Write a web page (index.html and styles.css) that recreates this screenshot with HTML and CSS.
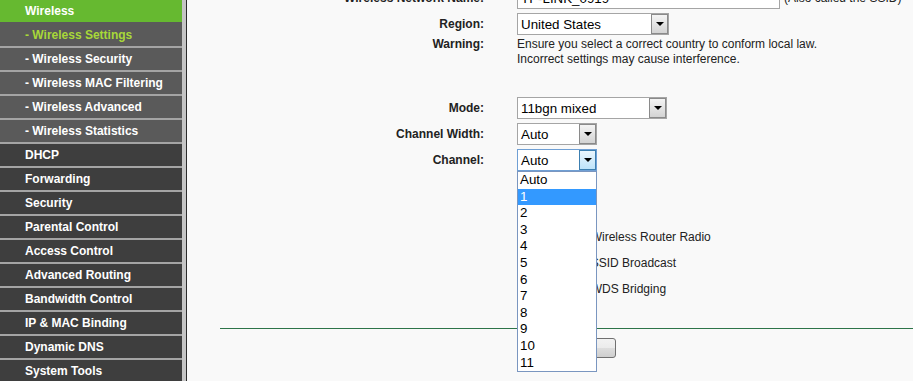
FILE: index.html
```html
<!DOCTYPE html>
<html lang="en">
<head>
    <meta charset="UTF-8">
    <title>Wireless Settings</title>
    <link rel="stylesheet" href="styles.css">
</head>
<body>

    <div class="page">
        <div class="menu">
            <div class="active">Wireless</div>
            <div class="sub current">- Wireless Settings</div>
            <div class="sub">- Wireless Security</div>
            <div class="sub">- Wireless MAC Filtering</div>
            <div class="sub">- Wireless Advanced</div>
            <div class="sub">- Wireless Statistics</div>
            <div class="item">DHCP</div>
            <div class="item">Forwarding</div>
            <div class="item">Security</div>
            <div class="item">Parental Control</div>
            <div class="item">Access Control</div>
            <div class="item">Advanced Routing</div>
            <div class="item">Bandwidth Control</div>
            <div class="item">IP &amp; MAC Binding</div>
            <div class="item">Dynamic DNS</div>
            <div class="item">System Tools</div>
        </div>

        <div class="main">
            <div class="form">
                <div class="label">Wireless Network Name:</div>
                <div class="field">
                    <div class="textbox">TP-LINK_0919</div>
                    <span class="note">(Also called the SSID)</span>
                </div>

                <div class="label">Region:</div>
                <div class="field">
                    <div class="select region"><span class="value">United States</span><span class="arrow"></span></div>
                </div>

                <div class="label top">Warning:</div>
                <div class="field multi">
                    Ensure you select a correct country to conform local law.<br>
                    Incorrect settings may cause interference.
                </div>

                <div class="spacer gap28"></div>

                <div class="label">Mode:</div>
                <div class="field">
                    <div class="select mode"><span class="value">11bgn mixed</span><span class="arrow"></span></div>
                </div>

                <div class="label">Channel Width:</div>
                <div class="field">
                    <div class="select short"><span class="value">Auto</span><span class="arrow"></span></div>
                </div>

                <div class="label">Channel:</div>
                <div class="field">
                    <div class="select short focus">
                        <span class="value">Auto</span><span class="arrow"></span>
                        <div class="options">
                            <div>Auto</div>
                            <div class="hover">1</div>
                            <div>2</div>
                            <div>3</div>
                            <div>4</div>
                            <div>5</div>
                            <div>6</div>
                            <div>7</div>
                            <div>8</div>
                            <div>9</div>
                            <div>10</div>
                            <div>11</div>
                        </div>
                    </div>
                </div>

                <div class="spacer gap51"></div>

                <div class="label"></div>
                <div class="field check"><input type="checkbox" checked>Enable Wireless Router Radio</div>

                <div class="label"></div>
                <div class="field check"><input type="checkbox" checked>Enable SSID Broadcast</div>

                <div class="label"></div>
                <div class="field check"><input type="checkbox">Enable WDS Bridging</div>

                <div class="rule"></div>

                <div class="buttons">
                    <button class="save">Save</button>
                </div>
            </div>
        </div>
    </div>

</body>
</html>
```

FILE: styles.css
```css
body {
    margin: 0;
    font-family: "Liberation Sans", Arial, sans-serif;
    overflow: hidden;
}

.page {
    display: flex;
    height: 381px;
}

.menu {
    width: 182px;
    flex-shrink: 0;
    display: flex;
    flex-direction: column;
    background: #a4a4a4;
    border-right: 4px solid #c5c5c5;
    overflow: hidden;
}

.menu div {
    height: 22px;
    line-height: 22px;
    padding-left: 25px;
    border-bottom: 2px solid #a4a4a4;
    font-size: 12px;
    font-weight: bold;
    color: #fff;
    white-space: nowrap;
    flex-shrink: 0;
}

.menu .active {
    background: #66b930;
    border-bottom-color: #5a5a5a;
}

.menu .sub {
    background: #5a5a5a;
}

.menu .current {
    color: #a8d838;
}

.menu .item {
    background: #3e3e3e;
}

.main {
    flex: 1;
    background: #f9f9f9;
    border-left: 1px solid #2b2b2b;
    overflow: hidden;
}

.form {
    display: grid;
    grid-template-columns: 264px 1fr;
    column-gap: 33px;
    padding-left: 33px;
    margin-top: -15px;
}

.label {
    height: 26px;
    display: flex;
    align-items: center;
    justify-content: flex-end;
    font-size: 12px;
    font-weight: bold;
    color: #222;
    white-space: nowrap;
}

.label.top {
    height: 30px;
    align-items: flex-start;
    line-height: 15px;
}

.field {
    height: 26px;
    display: flex;
    align-items: center;
    font-size: 12px;
    color: #222;
    white-space: nowrap;
}

.field.multi {
    display: block;
    height: 30px;
    line-height: 15px;
}

.spacer {
    grid-column: 1 / -1;
}

.gap28 {
    height: 28px;
}

.gap51 {
    height: 51px;
}

.textbox {
    width: 263px;
    height: 21px;
    box-sizing: border-box;
    border: 1px solid #a5a5a5;
    background: #fff;
    padding-left: 3px;
    font-size: 13.33px;
    line-height: 19px;
    color: #000;
}

.note {
    margin-left: 4px;
}

.select {
    position: relative;
    height: 22px;
    box-sizing: border-box;
    display: flex;
    align-items: center;
    border: 1px solid #a5a5a5;
    background: #fff;
    padding-left: 3px;
    font-size: 13.33px;
    color: #000;
}

.select.region {
    width: 152px;
}

.select.mode {
    width: 150px;
}

.select.short {
    width: 80px;
}

.select .value {
    flex: 1;
}

.select .arrow {
    width: 17px;
    height: 20px;
    box-sizing: border-box;
    display: flex;
    align-items: center;
    justify-content: center;
    border: 1px solid #8a8a8a;
    background: linear-gradient(#f4f4f4, #d3d3d3);
}

.select .arrow::after {
    content: "";
    border-left: 4px solid transparent;
    border-right: 4px solid transparent;
    border-top: 4px solid #000;
}

.select.focus {
    border-color: #6f9fd4;
}

.select.focus .arrow {
    border-color: #3c7fb1;
    background: linear-gradient(#eaf6fd, #bde3fa);
}

.options {
    position: absolute;
    top: 21px;
    left: -1px;
    width: 80px;
    box-sizing: border-box;
    border: 1px solid #7a96c0;
    background: #fff;
    z-index: 2;
}

.options div {
    height: 16.6px;
    line-height: 16.6px;
    padding-left: 2px;
    font-size: 13.33px;
    color: #000;
}

.options .hover {
    background: #3399ff;
    color: #fff;
}

.check input {
    width: 13px;
    height: 13px;
    margin: 0 16px 0 4px;
}

.rule {
    grid-column: 1 / -1;
    height: 1px;
    margin-top: 26px;
    background: #2d7449;
}

.buttons {
    grid-column: 2;
    padding-top: 9px;
}

.save {
    margin-left: 28px;
    width: 71px;
    height: 20px;
    border: 1px solid #707070;
    border-radius: 3px;
    background: linear-gradient(#f2f2f2 0%, #ebebeb 50%, #dddddd 51%, #cfcfcf 100%);
    font-family: "Liberation Sans", Arial, sans-serif;
    font-size: 12px;
    color: #000;
}
```
